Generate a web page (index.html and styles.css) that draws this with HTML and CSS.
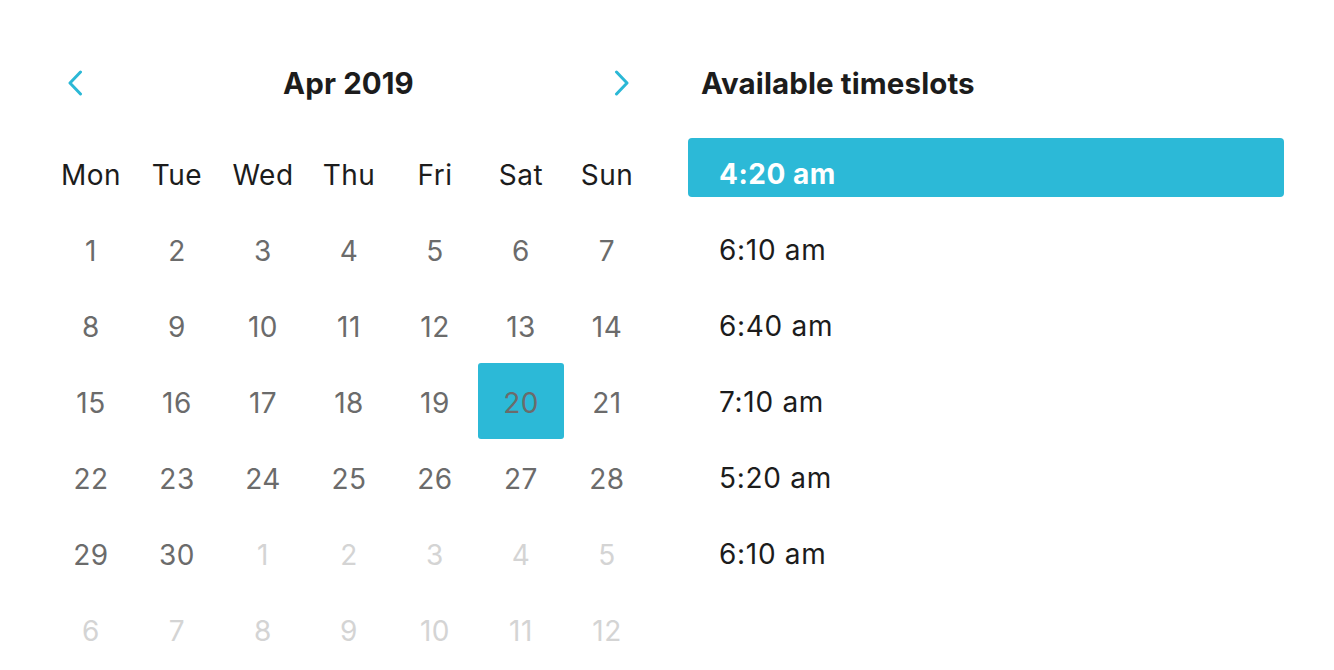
FILE: index.html
```html
<!DOCTYPE html>
<html>
<head>
  <meta charset="UTF-8">
  <title>Schedule</title>
  <link rel="stylesheet" href="styles.css">
</head>
<body>
    <div class="scheduler">

        <div class="calendar">
            <div class="calHeader">
                <span class="arrow">
                    <svg width="16" height="26" viewBox="0 0 16 26"><path d="M13.5 2 L3 13 L13.5 24" fill="none" stroke="#2bb8d6" stroke-width="3" stroke-linecap="round" stroke-linejoin="round"/></svg>
                </span>
                <h2 class="monthTitle">Apr 2019</h2>
                <span class="arrow">
                    <svg width="16" height="26" viewBox="0 0 16 26"><path d="M2.5 2 L13 13 L2.5 24" fill="none" stroke="#2bb8d6" stroke-width="3" stroke-linecap="round" stroke-linejoin="round"/></svg>
                </span>
            </div>

            <div class="days">
                <div class="dayName">Mon</div>
                <div class="dayName">Tue</div>
                <div class="dayName">Wed</div>
                <div class="dayName">Thu</div>
                <div class="dayName">Fri</div>
                <div class="dayName">Sat</div>
                <div class="dayName">Sun</div>

                <div class="day">1</div>
                <div class="day">2</div>
                <div class="day">3</div>
                <div class="day">4</div>
                <div class="day">5</div>
                <div class="day">6</div>
                <div class="day">7</div>

                <div class="day">8</div>
                <div class="day">9</div>
                <div class="day">10</div>
                <div class="day">11</div>
                <div class="day">12</div>
                <div class="day">13</div>
                <div class="day">14</div>

                <div class="day">15</div>
                <div class="day">16</div>
                <div class="day">17</div>
                <div class="day">18</div>
                <div class="day">19</div>
                <div class="day selected">20</div>
                <div class="day">21</div>

                <div class="day">22</div>
                <div class="day">23</div>
                <div class="day">24</div>
                <div class="day">25</div>
                <div class="day">26</div>
                <div class="day">27</div>
                <div class="day">28</div>

                <div class="day">29</div>
                <div class="day">30</div>
                <div class="day other">1</div>
                <div class="day other">2</div>
                <div class="day other">3</div>
                <div class="day other">4</div>
                <div class="day other">5</div>

                <div class="day other">6</div>
                <div class="day other">7</div>
                <div class="day other">8</div>
                <div class="day other">9</div>
                <div class="day other">10</div>
                <div class="day other">11</div>
                <div class="day other">12</div>
            </div>
        </div>

        <div class="timeslots">
            <h2 class="slotsTitle">Available timeslots</h2>
            <div class="slot active">4:20 am</div>
            <div class="slot">6:10 am</div>
            <div class="slot">6:40 am</div>
            <div class="slot">7:10 am</div>
            <div class="slot">5:20 am</div>
            <div class="slot">6:10 am</div>
        </div>

    </div>
</body>
</html>
```

FILE: styles.css
```css
body {
    font-family: Inter, "Noto Sans", sans-serif;
    margin: 0;
    background-color: white;
    color: #1c1c1c;
}

.scheduler{
    display: flex;
    gap: 38px;
    padding: 45px 0 0 48px;
}

.calendar{
    width: 602px;
}

.calHeader{
    display: flex;
    align-items: center;
    justify-content: space-between;
    height: 76px;
    padding: 0 20px 0 19px;
    margin-bottom: 14px;
}

.arrow{
    display: flex;
    width: 16px;
    height: 26px;
}

.monthTitle, .slotsTitle{
    margin: 0;
    font-size: 29.5px;
    font-weight: 700;
    letter-spacing: 0.1px;
    color: #1c1c1c;
}

.days{
    display: grid;
    grid-template-columns: repeat(7, 86px);
    grid-auto-rows: 76px;
}

.dayName, .day{
    display: flex;
    align-items: center;
    justify-content: center;
    box-sizing: border-box;
    padding-top: 3px;
    font-size: 28px;
    letter-spacing: 0.5px;
}

.dayName{
    color: #1c1c1c;
}

.day{
    color: #6b6b6b;
}

.day.other{
    color: #d4d4d4;
}

.day.selected{
    background-color: #2cb9d7;
    border-radius: 3px;
}

.timeslots{
    width: 596px;
}

.slotsTitle{
    height: 76px;
    display: flex;
    align-items: center;
    padding-left: 13px;
    margin-bottom: 17px;
}

.slot{
    display: flex;
    align-items: center;
    height: 59px;
    box-sizing: border-box;
    padding: 13px 0 0 31px;
    margin-bottom: 17px;
    font-size: 28px;
    letter-spacing: 0.7px;
    color: #1c1c1c;
    border-radius: 4px;
}

.slot.active{
    background-color: #2cb9d7;
    color: white;
    font-weight: 700;
    letter-spacing: 0.5px;
}
```
